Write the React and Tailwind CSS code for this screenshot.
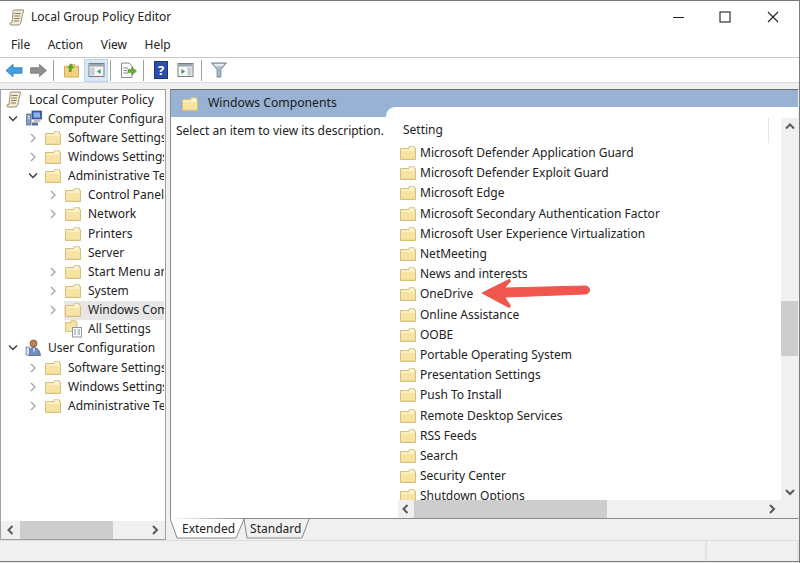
import React from 'react';

const Folder = ({ className = '' }) => (
  <svg width="16" height="14" viewBox="0 0 16 14" className={`shrink-0 ${className}`}>
    <path d="M0.5 2.5 H9 V0.8 H14.5 V2.5 H15.5 V13.5 H0.5 Z" fill="#f7e3a4" stroke="#d8bf7e" />
    <path d="M9.5 1.5 H14 V3.5 H9.5 Z" fill="#fefaea" />
    <path d="M1.5 3.5 H14.5 V5 H1.5 Z" fill="#fcf1c8" />
    <path d="M1 12.5 H15 V13 H1 Z" fill="#e9d08f" />
  </svg>
);

const Scroll = () => (
  <svg width="16" height="17" viewBox="0 0 16 17" className="shrink-0">
    <path d="M5 1 H14.5 C15 3 14 4 13.5 5 L12 13 C11.5 15 10.5 16 9 16 H2 C0.5 16 0.5 13.5 2 13.5 H3 L4 4 C4 3 4 1.5 5 1 Z" fill="#f3ead0" stroke="#8c8269" strokeWidth="0.9" />
    <path d="M5.5 4.5 H11.5 M5.2 7 H11 M5 9.5 H10.6 M4.8 12 H10" stroke="#77705e" strokeWidth="0.9" />
  </svg>
);

const Computer = () => (
  <svg width="17" height="17" viewBox="0 0 17 17" className="shrink-0">
    <rect x="7" y="1" width="9.5" height="8" fill="#3e63b8" stroke="#2a3f7d" strokeWidth="0.7" />
    <rect x="8.5" y="2.5" width="6.5" height="5" fill="#8eb2ea" />
    <path d="M9 10 H15 L16 12 H8 Z" fill="#b8bdc9" />
    <rect x="1.5" y="4" width="4.5" height="11" fill="#87a0c6" stroke="#4a5f85" strokeWidth="0.7" />
    <path d="M3 6.5 H5 M3 8.5 H5" stroke="#e5edf8" />
    <path d="M7 12.5 H13 V15.5 H7 Z" fill="#5a6f98" />
  </svg>
);

const User = () => (
  <svg width="17" height="18" viewBox="0 0 17 18" className="shrink-0">
    <circle cx="8.5" cy="4.5" r="3.5" fill="#b9814f" stroke="#6f4a2b" strokeWidth="0.7" />
    <path d="M3.5 16.5 C3 11 5.5 8.5 8.5 8.5 C12 8.5 15 11 15.5 16.5 Z" fill="#6f8fc0" stroke="#3e567f" strokeWidth="0.7" />
    <rect x="1" y="8" width="3.5" height="8" fill="#cfe0ef" stroke="#5c7797" strokeWidth="0.7" />
    <path d="M8 9.5 L9 14 L10 9.5 Z" fill="#f2f2f2" />
  </svg>
);

const AllSettings = () => (
  <svg width="18" height="18" viewBox="0 0 18 18" className="shrink-0">
    <path d="M0.5 2.5 H6 V0.8 H11 V2.5 H12 V11.5 H0.5 Z" fill="#f7e3a4" stroke="#d8bf7e" />
    <rect x="7.5" y="7.5" width="9" height="9.5" fill="#fdfdfd" stroke="#8d98a8" />
    <path d="M9 10 H11 M12.5 10 H15 M9 12 H11 M12.5 12 H15 M9 14 H11 M12.5 14 H15" stroke="#7d8ea8" />
  </svg>
);

const Chev = ({ open, blank }) => {
  if (blank) return <span className="w-[10px] shrink-0" />;
  return open ? (
    <svg width="10" height="8" viewBox="0 0 10 8" className="shrink-0">
      <path d="M1 1.5 L5 5.5 L9 1.5" fill="none" stroke="#404040" strokeWidth="1.5" />
    </svg>
  ) : (
    <svg width="10" height="10" viewBox="0 0 10 10" className="shrink-0">
      <path d="M3 1 L7 5 L3 9" fill="none" stroke="#a6a6a6" strokeWidth="1.4" />
    </svg>
  );
};

const tree = [
  { t: 'Local Computer Policy', lvl: 0, icon: 'scroll', blank: true },
  { t: 'Computer Configuration', lvl: 1, icon: 'pc', open: true },
  { t: 'Software Settings', lvl: 2 },
  { t: 'Windows Settings', lvl: 2 },
  { t: 'Administrative Templates', lvl: 2, open: true },
  { t: 'Control Panel', lvl: 3 },
  { t: 'Network', lvl: 3 },
  { t: 'Printers', lvl: 3, blank: true },
  { t: 'Server', lvl: 3, blank: true },
  { t: 'Start Menu and Taskbar', lvl: 3 },
  { t: 'System', lvl: 3 },
  { t: 'Windows Components', lvl: 3, sel: true },
  { t: 'All Settings', lvl: 3, icon: 'all', blank: true },
  { t: 'User Configuration', lvl: 1, icon: 'user', open: true },
  { t: 'Software Settings', lvl: 2 },
  { t: 'Windows Settings', lvl: 2 },
  { t: 'Administrative Templates', lvl: 2 },
];

const pad = { 0: 'pl-[4px]', 1: 'pl-[7px]', 2: 'pl-[27px]', 3: 'pl-[47px]' };

const TreeRow = ({ row }) => (
  <div className={`h-[19.15px] flex items-center whitespace-nowrap ${pad[row.lvl]}`}>
    {row.lvl > 0 && <Chev open={row.open} blank={row.blank} />}
    <div className={`flex items-center h-full flex-1 min-w-0 overflow-hidden ${row.lvl > 0 ? 'ml-[6px]' : ''} ${row.sel ? 'bg-[#e6e6e6]' : ''}`}>
      <span className="w-[17px] pl-[1px] flex shrink-0">
        {row.icon === 'scroll' && <Scroll />}
        {row.icon === 'pc' && <Computer />}
        {row.icon === 'user' && <User />}
        {row.icon === 'all' && <AllSettings />}
        {!row.icon && <Folder />}
      </span>
      <span className="ml-[7px]">{row.t}</span>
    </div>
  </div>
);

const settings = [
  'Microsoft Defender Application Guard',
  'Microsoft Defender Exploit Guard',
  'Microsoft Edge',
  'Microsoft Secondary Authentication Factor',
  'Microsoft User Experience Virtualization',
  'NetMeeting',
  'News and interests',
  'OneDrive',
  'Online Assistance',
  'OOBE',
  'Portable Operating System',
  'Presentation Settings',
  'Push To Install',
  'Remote Desktop Services',
  'RSS Feeds',
  'Search',
  'Security Center',
  'Shutdown Options',
];

const Sep = ({ className = '' }) => <div className={`w-px h-[21px] bg-[#a0a0a0] shrink-0 ${className}`} />;

const Arrow = ({ dir }) => {
  const d = {
    left: 'M6.5 1 L2.5 5 L6.5 9',
    right: 'M3 1 L7 5 L3 9',
    up: 'M1 6.5 L5 2.5 L9 6.5',
    down: 'M1 3 L5 7 L9 3',
  }[dir];
  return (
    <svg width="10" height="10" viewBox="0 0 10 10" className="shrink-0">
      <path d={d} fill="none" stroke="#5a5a5a" strokeWidth="2" />
    </svg>
  );
};

export default function App() {
  return (
    <div
      className="w-[800px] h-[563px] bg-[#f0f0f0] flex flex-col overflow-hidden relative text-[12px] text-[#222] border-t border-r border-[#7a7a7a]"
      style={{ fontFamily: '"Noto Sans", "Open Sans", sans-serif' }}
    >
      {/* Title bar */}
      <div className="h-[32px] bg-white flex items-center pl-[9px] shrink-0">
        <Scroll />
        <span className="ml-[6px]">Local Group Policy Editor</span>
        <div className="ml-auto flex items-center">
          <svg width="12" height="12" viewBox="0 0 12 12" className="mr-[35px]"><path d="M1 6.5 H12" stroke="#222" /></svg>
          <svg width="12" height="12" viewBox="0 0 12 12" className="mr-[36px]"><rect x="1" y="1" width="10" height="10" fill="none" stroke="#222" strokeWidth="1.1" /></svg>
          <svg width="12" height="12" viewBox="0 0 12 12" className="mr-[20px]"><path d="M1 1 L11 11 M11 1 L1 11" stroke="#222" strokeWidth="1.1" /></svg>
        </div>
      </div>

      {/* Menu */}
      <div className="h-[24px] bg-white flex items-center pl-[11px] gap-[17.5px] border-b border-[#c8c8c8] shrink-0 box-content">
        <span>File</span>
        <span>Action</span>
        <span>View</span>
        <span>Help</span>
      </div>

      {/* Toolbar */}
      <div className="h-[25px] bg-white flex items-center pl-[5px] border-b border-[#dcdcdc] shrink-0">
        <svg width="18" height="15" viewBox="0 0 19 15" className="shrink-0"><path d="M1 7.5 L8.5 1 V4.5 H18 V10.5 H8.5 V14 Z" fill="#3f9fe0" stroke="#1f6fb0" strokeWidth="0.7" /></svg>
        <svg width="17" height="15" viewBox="0 0 18 15" className="ml-[7px] shrink-0"><path d="M17.5 7.5 L10 1 V4.5 H0.5 V10.5 H10 V14 Z" fill="#8f8f8f" stroke="#707070" strokeWidth="0.7" /></svg>
        <Sep className="ml-[6px]" />
        <svg width="15" height="16" viewBox="0 0 16 16" className="ml-[10px] shrink-0">
          <path d="M0.5 4 H6 V2 H11 V4 H15.5 V15.5 H0.5 Z" fill="#f3d279" stroke="#c9a95b" />
          <path d="M5 10 L5.5 6 L3.5 6 L7.5 1 L11 6 L8.5 6 L8 10 Z" fill="#55a72e" />
        </svg>
        <div className="w-[24px] h-[23px] ml-[5px] bg-[#d8e8f6] border border-[#b7d6ee] flex items-center justify-center shrink-0">
          <svg width="17" height="14" viewBox="0 0 16 14">
            <rect x="0.5" y="0.5" width="15" height="13" fill="#f6f6f6" stroke="#7c7c7c" />
            <rect x="1" y="1" width="14" height="2.5" fill="#9aa4ae" />
            <rect x="2" y="4.5" width="4" height="8" fill="#c4ccd4" />
            <path d="M12 6 L8.5 8.5 L12 11 Z" fill="#3f8f76" />
          </svg>
        </div>
        <Sep className="ml-[2px]" />
        <svg width="17" height="17" viewBox="0 0 17 17" className="ml-[9px] shrink-0">
          <path d="M1.5 1 H9 L12 4 V15.5 H1.5 Z" fill="#fbfbfb" stroke="#8c8c8c" />
          <path d="M3.5 6 H8 M3.5 8.5 H7 M3.5 11 H8" stroke="#8c8c8c" />
          <path d="M8 7.5 H12 V5 L16.5 9 L12 13 V10.5 H8 Z" fill="#62b02f" stroke="#3f8a1c" strokeWidth="0.5" />
        </svg>
        <Sep className="ml-[6px]" />
        <div className="w-[14px] h-[18px] ml-[10px] bg-[#2d4fa8] border border-[#1c3378] flex items-center justify-center text-white text-[13px] font-bold leading-none shrink-0">?</div>
        <svg width="17" height="14" viewBox="0 0 16 14" className="ml-[9px] shrink-0">
          <rect x="0.5" y="0.5" width="15" height="13" fill="#f6f6f6" stroke="#7c7c7c" />
          <rect x="1" y="1" width="14" height="2.5" fill="#9aa4ae" />
          <rect x="10" y="4.5" width="4" height="8" fill="#c4ccd4" />
          <path d="M4 6 L7.5 8.5 L4 11 Z" fill="#3f8f76" />
        </svg>
        <Sep className="ml-[7px]" />
        <svg width="16" height="16" viewBox="0 0 17 16" className="ml-[9px] shrink-0">
          <path d="M0.5 0.5 H16.5 L10.5 7.5 V15.5 H6.5 V7.5 Z" fill="#a9bdc9" stroke="#6f8796" />
          <path d="M2.5 1.5 H14.5 L12 4 H5 Z" fill="#e3ebef" />
        </svg>
      </div>

      {/* Panes */}
      <div className="flex-1 flex min-h-0 pt-[6px] gap-[4px]">
        {/* Tree */}
        <div className="w-[166px] h-[451px] bg-white border border-[#a0a0a0] flex flex-col shrink-0 overflow-hidden">
          <div className="flex-1 overflow-hidden pr-[1px]">
            {tree.map((row, i) => <TreeRow key={i} row={row} />)}
          </div>
          <div className="h-[18px] bg-[#f0f0f0] flex items-center">
            <span className="w-[19px] flex justify-center"><Arrow dir="left" /></span>
            <div className="w-[93px] h-full bg-[#cdcdcd]" />
            <span className="ml-auto w-[20px] flex justify-center"><Arrow dir="right" /></span>
          </div>
        </div>

        {/* Right side */}
        <div className="flex-1 flex flex-col min-w-0">
          <div className="h-[430px] flex border-t border-l border-r border-b border-t-[#6d6d6d] border-l-[#8a8a8a] border-r-[#f0f0f0] border-b-[#8a8a8a] bg-white">
            <div className="w-[215px] shrink-0 flex flex-col">
              <div className="h-[27px] bg-[#97b2d2] flex items-center pl-[11px] shrink-0">
                <Folder />
                <span className="ml-[10px] text-[12.2px] text-[#1a1a1a]">Windows Components</span>
              </div>
              <div className="pl-[5px] pt-[5px] whitespace-nowrap">Select an item to view its description.</div>
            </div>
            <div className="flex-1 min-w-0 flex flex-col bg-[#97b2d2]">
              <div className="h-[17px] shrink-0" />
              <div className="flex-1 min-h-0 bg-white rounded-tl-[9px] flex flex-col overflow-hidden">
                <div className="flex-1 min-h-0 flex">
                  <div className="flex-1 min-w-0 flex flex-col">
                    <div className="h-[36px] pt-[14px] pl-[17px] flex shrink-0">
                      <span className="leading-[18px]">Setting</span>
                      <div className="ml-auto mt-[-3px] mr-[12px] w-px h-[25px] bg-[#e5e5e5]" />
                    </div>
                    <div className="flex-1 min-h-0 overflow-hidden">
                      {settings.map(s => (
                        <div key={s} className="h-[20.2px] flex items-center pl-[14px] whitespace-nowrap">
                          <Folder />
                          <span className="ml-[4px]">{s}</span>
                        </div>
                      ))}
                    </div>
                  </div>
                  <div className="w-[17px] mt-[11px] bg-[#f0f0f0] flex flex-col items-center shrink-0">
                    <span className="h-[17px] flex items-center"><Arrow dir="up" /></span>
                    <div className="w-full h-[55px] mt-[166px] bg-[#cdcdcd]" />
                    <span className="mt-auto h-[17px] flex items-center"><Arrow dir="down" /></span>
                  </div>
                </div>
                <div className="h-[18px] ml-[12px] bg-[#f0f0f0] flex items-center shrink-0">
                  <span className="w-[16px] flex justify-center"><Arrow dir="left" /></span>
                  <div className="w-[193px] h-full bg-[#cdcdcd]" />
                  <span className="ml-auto mr-[21px] flex justify-center"><Arrow dir="right" /></span>
                </div>
              </div>
            </div>
          </div>

          {/* Tabs */}
          <div className="h-[20px] flex relative text-[#222]">
            <svg width="150" height="21" viewBox="0 0 150 21" className="absolute left-0 top-[-1px]">
              <path d="M74 1 L77 20 H132 L139 1" fill="#f0f0f0" stroke="#8a8a8a" />
              <path d="M0 0 L7 20 H66 L74 1" fill="#fff" stroke="#8a8a8a" />
            </svg>
            <span className="relative ml-[12px] leading-[20px]">Extended</span>
            <span className="relative ml-[15px] leading-[20px]">Standard</span>
          </div>
        </div>
      </div>

      {/* Status bar */}
      <div className="h-[22px] mt-[1px] border-t border-[#dcdcdc] border-b border-b-[#7a7a7a] flex justify-end shrink-0 mb-[1px]">
        <div className="w-[94px] h-full border-l-2 border-r-2 border-[#e3e3e3]" />
      </div>

      {/* annotation arrow */}
      <svg width="120" height="36" viewBox="0 0 120 36" className="absolute left-[478px] top-[274px]">
        <path d="M4 18 L30 5 C31 4 33 5 32 7 C30 9 28 11 27 13 L107 11 C113 11 113 19 107 19 L27 22 C28 25 31 28 32 30 C33 32 31 33 30 32 Z" fill="#f0564e" stroke="#f0564e" strokeLinejoin="round" />
      </svg>
    </div>
  );
}
